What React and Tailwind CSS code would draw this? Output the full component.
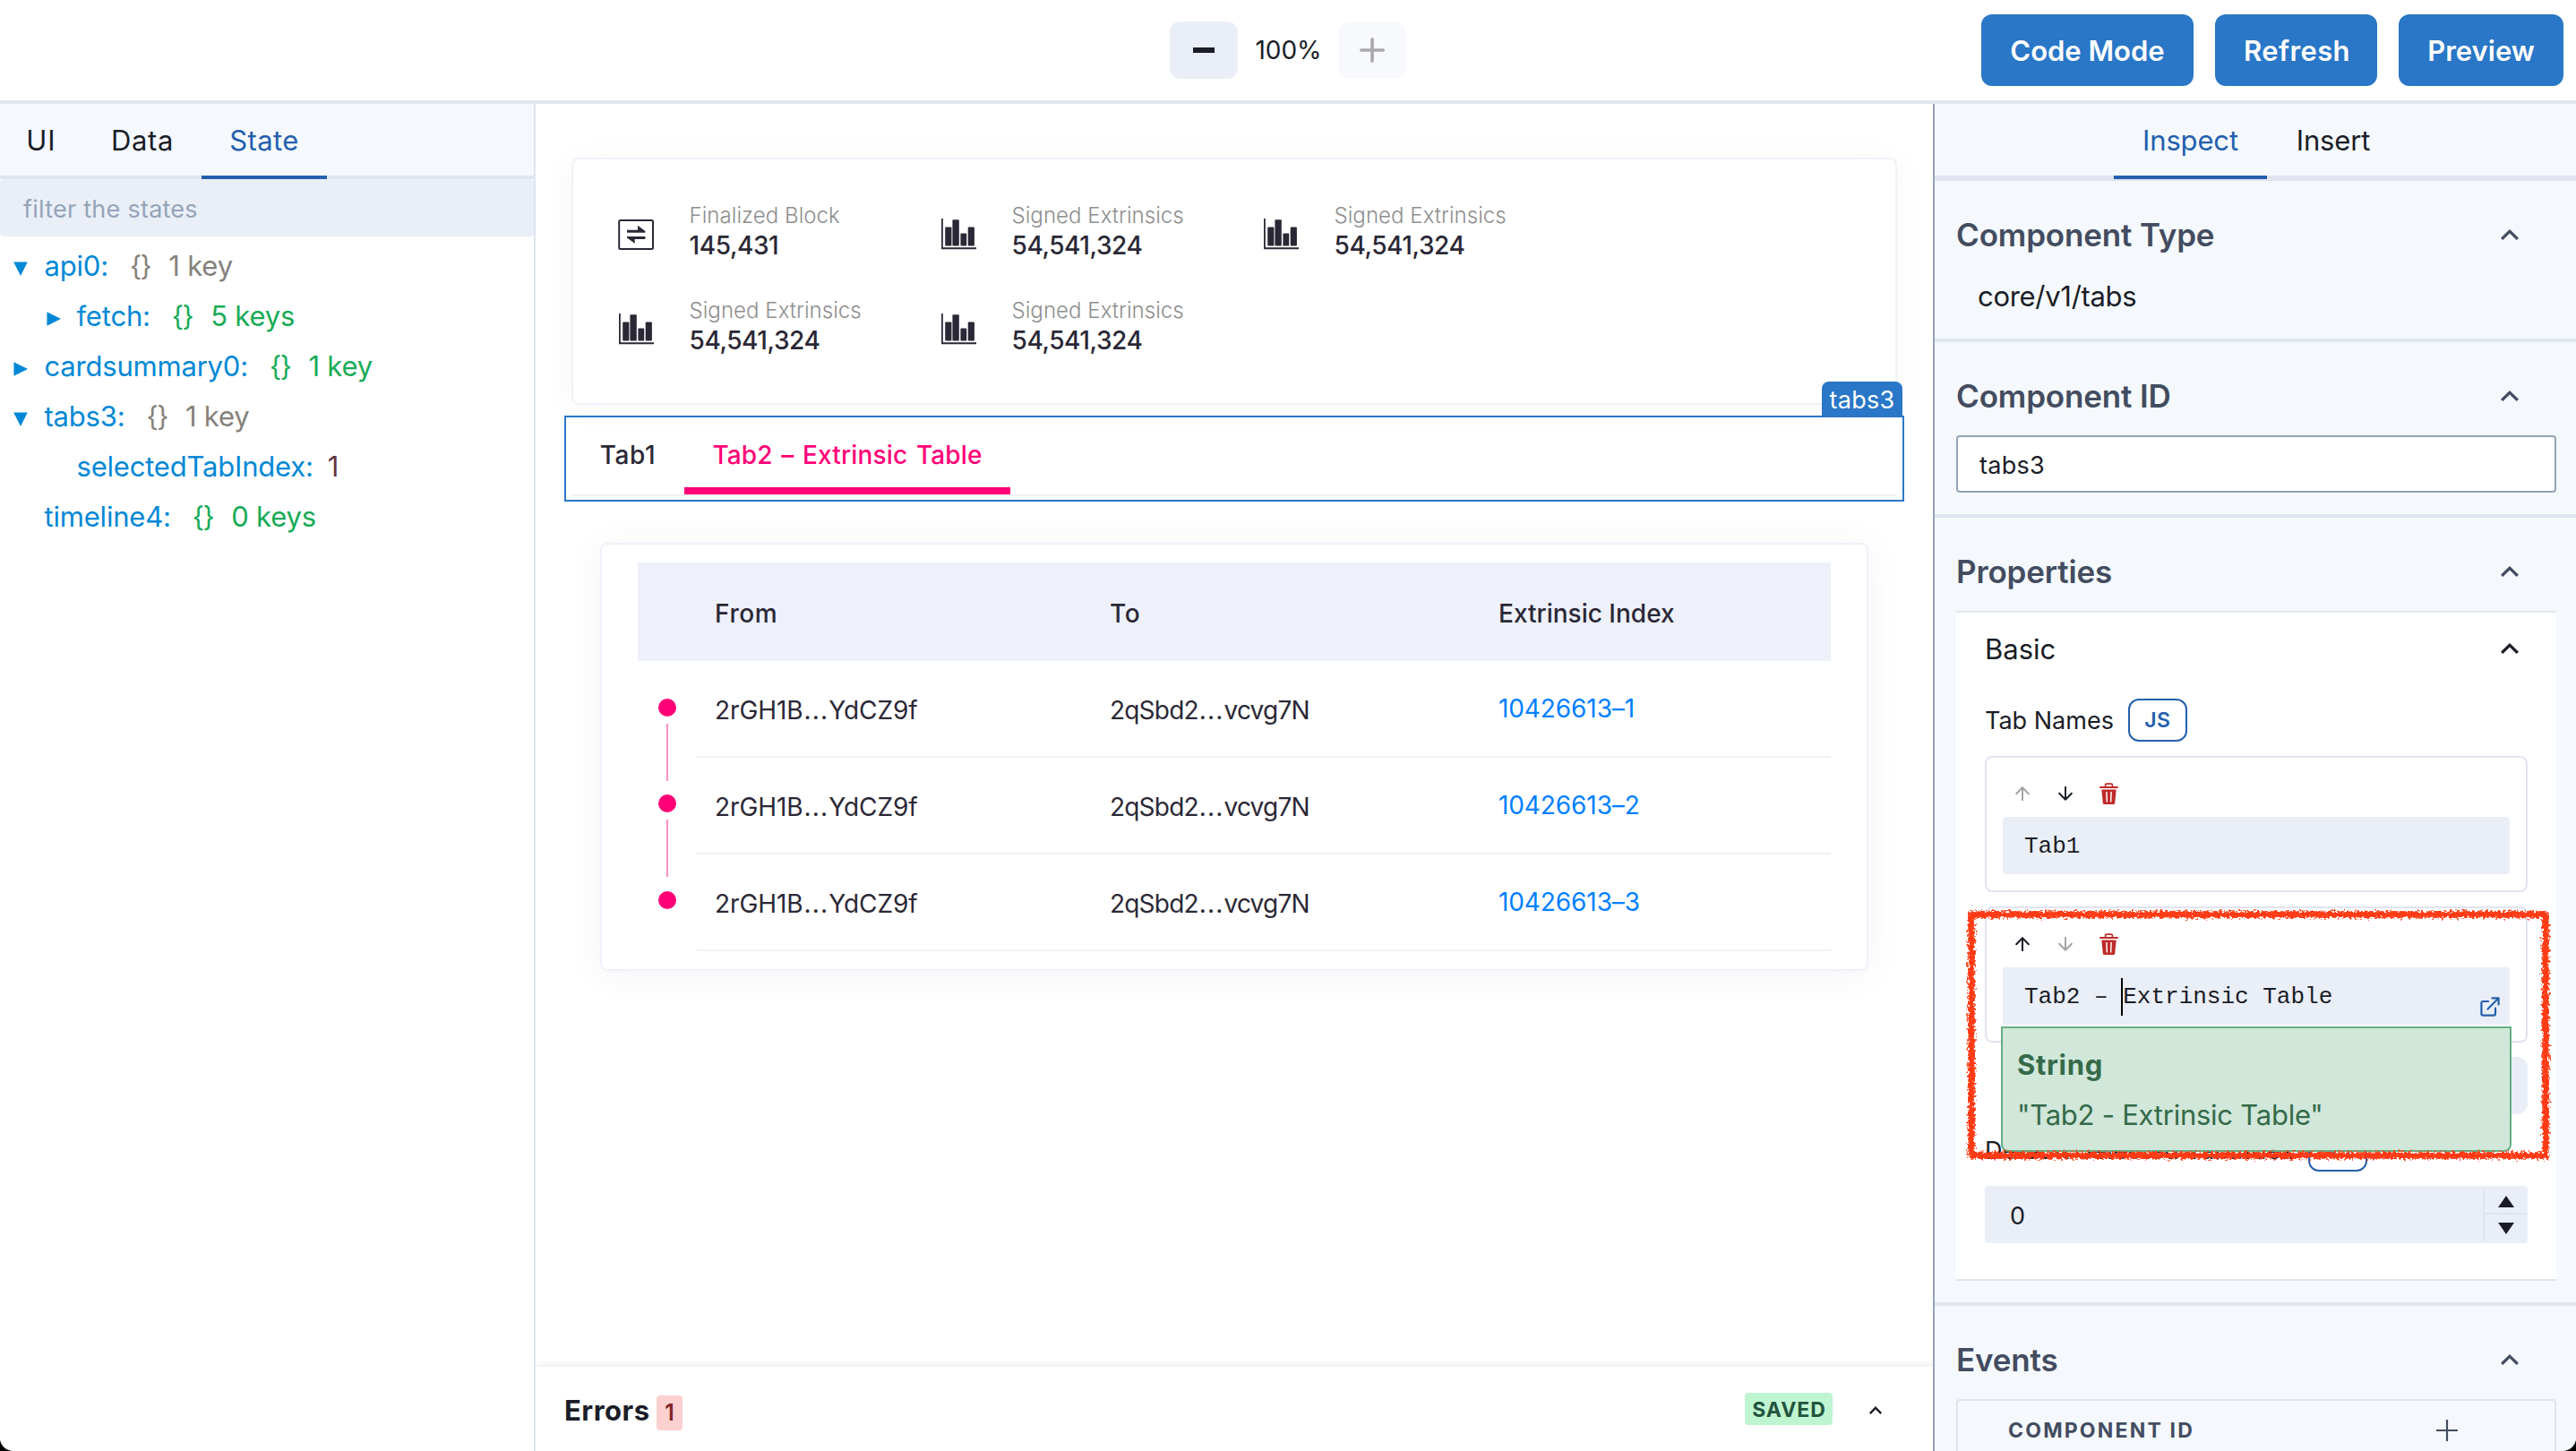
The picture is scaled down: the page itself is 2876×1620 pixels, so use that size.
import React, { useState } from 'react';

const states = [
    { name: 'api0:', open: true, keys: '1 key', tone: 'text-[#85817b]' },
    { name: 'fetch:', open: false, keys: '5 keys', tone: 'text-[#18ab57]', nested: true },
    { name: 'cardsummary0:', open: false, keys: '1 key', tone: 'text-[#18ab57]' },
    { name: 'tabs3:', open: true, keys: '1 key', tone: 'text-[#85817b]' },
    { name: 'selectedTabIndex:', value: '1', nested: true },
    { name: 'timeline4:', keys: '0 keys', tone: 'text-[#18ab57]' },
];

const stats = [
    { label: 'Finalized Block', value: '145,431', icon: 'exchange' },
    { label: 'Signed Extrinsics', value: '54,541,324', icon: 'bars' },
    { label: 'Signed Extrinsics', value: '54,541,324', icon: 'bars' },
    { label: 'Signed Extrinsics', value: '54,541,324', icon: 'bars' },
    { label: 'Signed Extrinsics', value: '54,541,324', icon: 'bars' },
];

const extrinsics = ['10426613–1', '10426613–2', '10426613–3'];

function Chevron({ className = 'h-3 w-5' }) {
    return (
        <svg viewBox="6 8 12 7.41" preserveAspectRatio="none" className={className} fill="currentColor">
            <path d="M12 8l-6 6 1.41 1.41L12 10.83l4.59 4.58L18 14z" />
        </svg>
    );
}

function Arrow({ down, disabled }) {
    return (
        <button className={`flex w-12 justify-center ${disabled ? 'text-[#a3a4a8]' : 'text-[#1a1d27]'}`}>
            <svg viewBox="0 0 16 16" className={`size-4 ${down ? 'rotate-180' : ''}`} fill="none" stroke="currentColor" strokeWidth="2" strokeLinecap="round" strokeLinejoin="round">
                <path d="M8 15.2V1.2M1.2 8.2L8 1.2l6.8 7" />
            </svg>
        </button>
    );
}

function Trash() {
    return (
        <button className="flex w-12 justify-center text-[#bf2a2a]">
            <svg viewBox="0 0 21 24" className="h-6 w-[21px]">
                <path d="M6.6 5V2.6A1.4 1.4 0 0 1 8 1.2h5a1.4 1.4 0 0 1 1.4 1.4V5" fill="none" stroke="currentColor" strokeWidth="1.7" />
                <rect x="0" y="4" width="21" height="2.1" rx="1" fill="currentColor" />
                <path
                    fillRule="evenodd"
                    fill="currentColor"
                    d="M2.3 7.6h16.4l-1.5 14.8a1.7 1.7 0 0 1-1.7 1.6h-10a1.7 1.7 0 0 1-1.7-1.6zM7.2 10l.4 11.6h1.5L8.7 10zM12.3 10l-.4 11.6h1.5l.4-11.6z"
                />
            </svg>
        </button>
    );
}

function StatIcon({ icon }) {
    if (icon === 'exchange') {
        return (
            <svg viewBox="0 0 40 36" className="mt-5 h-9 w-10 text-[#2b2836]" fill="currentColor">
                <rect x="1.2" y="2" width="37.8" height="32" rx="1.5" fill="none" stroke="currentColor" strokeWidth="2" />
                <path d="M10 15.8v-3h12V7.7l8.4 6.3v1.8zM30.4 20v3H18.7v4.8L10 21.5V20z" />
            </svg>
        );
    }
    return (
        <svg viewBox="0 0 40 36" className="mt-5 h-9 w-10 text-[#2b2836]" fill="currentColor">
            <path d="M1 0h1.8v32.2H40v2H1z" />
            <rect x="5.2" y="9.6" width="7.2" height="21" rx="1" />
            <rect x="13.4" y="1.2" width="7.4" height="29.4" rx="1" />
            <rect x="22.4" y="16.4" width="6.8" height="14.2" rx="1" />
            <rect x="30.7" y="9.6" width="7.2" height="21" rx="1" />
        </svg>
    );
}

function Header() {
    return (
        <header className="grid h-[116px] shrink-0 grid-cols-[1fr_auto_1fr] items-center border-b-4 border-[#dfe6ef] bg-white">
            <div className="col-start-2 flex items-center">
                <button className="flex h-16 w-19 items-center justify-center rounded-xl bg-[#eaeef7]">
                    <span className="h-1.5 w-6 bg-[#1a1d27]" />
                </button>
                <span className="w-28 pl-px text-center text-[28px]">100%</span>
                <button className="flex h-16 w-19 items-center justify-center rounded-xl bg-[#f8f9fc] text-[#a9a9ac]">
                    <svg viewBox="0 0 28 28" className="size-7" stroke="currentColor" strokeWidth="3.6" strokeLinecap="round">
                        <path d="M14 1.8v24.4M1.8 14h24.4" />
                    </svg>
                </button>
            </div>
            <div className="flex justify-end gap-6 pr-3.5 text-[31px] font-semibold text-white">
                <button className="h-20 w-[237px] rounded-xl bg-[#2a77c7] pt-0.5">Code Mode</button>
                <button className="h-20 w-[181px] rounded-xl bg-[#2a77c7] pt-0.5 pl-0.5 tracking-[0.4px]">Refresh</button>
                <button className="h-20 w-[184px] rounded-xl bg-[#2a77c7] pt-0.5">Preview</button>
            </div>
        </header>
    );
}

function StateRow({ name, open, keys, tone, value, nested }) {
    return (
        <li className={`flex h-14 items-center ${nested ? 'pl-[52px]' : 'pl-[15px]'}`}>
            <span className={`flex text-[#0088d6] ${nested ? 'w-[33.5px]' : 'w-[34.5px]'}`}>
                {open !== undefined && (
                    <svg viewBox="0 0 15 15" className={`mt-1.5 size-4 ${open ? 'rotate-90' : ''}`} fill="currentColor">
                        <path d="M0.4 0.2L15 7.5L0.4 14.8z" />
                    </svg>
                )}
            </span>
            <span className="text-[#0088d6]">{name}</span>
            {keys && <span className={`ml-6 tracking-[-1.5px] ${tone}`}>{'{}'}</span>}
            {keys && <span className={`ml-5 ${tone}`}>{keys}</span>}
            {value && <span className="ml-4 text-[#5e3643]">{value}</span>}
        </li>
    );
}

function StatePanel() {
    return (
        <aside className="w-[598px] shrink-0 border-r-2 border-[#dee4ef] bg-white text-[31px]">
            <nav className="flex h-21 border-b-4 border-[#dfe4ee] bg-[#f5f9fd]">
                <button className="h-21 w-[91px] pt-0.5 pb-1 pl-px tracking-[1px]">UI</button>
                <button className="h-21 w-[134px] pt-0.5 pb-1 pl-0.5 tracking-[0.6px]">Data</button>
                <button className="h-21 w-[140px] border-b-4 border-[#245fae] pt-0.5 tracking-[0.4px] text-[#245fae]">State</button>
            </nav>
            <input
                className="block h-16 w-full rounded-sm bg-[#eaeff7] pt-0.5 pl-[26px] text-[27px] tracking-[0.25px] outline-none placeholder:text-[#94a4b9]"
                placeholder="filter the states"
            />
            <ul className="pt-[5px] tracking-[-0.2px]">
                {states.map((s) => (
                    <StateRow key={s.name} {...s} />
                ))}
            </ul>
        </aside>
    );
}

function SummaryCard() {
    return (
        <div className="h-[276px] rounded-lg border-2 border-[#eff2f9] bg-white pt-[46px] pl-[50px] shadow-[0_4px_40px_rgba(0,0,0,0.035)]">
            <div className="grid grid-cols-[360px_360px_360px] gap-y-10">
                {stats.map((s, i) => (
                    <div key={i} className="flex h-[66px] gap-[39.5px]">
                        <StatIcon icon={s.icon} />
                        <div className="pt-px">
                            <div className="text-2xl/8 font-light tracking-[0.05px] text-[#8e8e8e]">{s.label}</div>
                            <div className="text-[28px]/[35px] font-medium tracking-[-0.4px] text-[#2b2836]">{s.value}</div>
                        </div>
                    </div>
                ))}
            </div>
        </div>
    );
}

function TabsBlock() {
    return (
        <div className="relative -mx-2 mt-3 h-24 border-2 border-[#2a77c7]">
            <span className="absolute right-0 bottom-full flex h-10 w-[90px] items-center justify-center rounded-t-lg bg-[#2a77c7] pt-[3px] text-[27px] tracking-[0.3px] text-white">
                tabs3
            </span>
            <div className="mx-1.5 flex h-22 border-b-2 border-[#eff2f7] text-[28px] font-medium">
                <button className="w-[126px] pb-0.5 tracking-[0.6px] text-[#2b2836]">Tab1</button>
                <button className="w-[364px] border-b-8 border-[#ff0077] pt-1.5 tracking-[0.15px] [word-spacing:2px] text-[#ff0077]">Tab2 – Extrinsic Table</button>
            </div>
        </div>
    );
}

function Address({ head, tail }) {
    return (
        <>
            {head}
            <span className="ml-px tracking-[1.2px]">...</span>
            {tail}
        </>
    );
}

function TimelineTable() {
    return (
        <div className="mx-8 mt-[46px] rounded-lg border-2 border-[#eff2f9] bg-white px-10 py-5 text-[28px] text-[#2b2836] shadow-[0_4px_40px_rgba(0,0,0,0.05)]">
            <div className="flex h-[110px] items-center bg-[#eef1fa] pt-1 pl-[66px] font-medium">
                <div className="w-[441px] pl-5 tracking-[0.6px]">From</div>
                <div className="w-[434px] pl-5 tracking-[0.6px]">To</div>
                <div className="pl-5">Extrinsic Index</div>
            </div>
            <div className="flex">
                <div className="flex w-[66px] flex-col items-center pt-[42px]">
                    {extrinsics.map((id, i) => (
                        <React.Fragment key={id}>
                            <span className="size-5 rounded-full bg-[#ff0077]" />
                            {i < extrinsics.length - 1 && <span className="mt-2 mb-[15.4px] h-16 w-0.5 bg-[#ff8fc4]" />}
                        </React.Fragment>
                    ))}
                </div>
                <div className="flex-1">
                    {extrinsics.map((id) => (
                        <div key={id} className="flex h-27 items-center border-b-2 border-[#eff2f8]">
                            <div className="w-[441px] pt-1 pl-5 tracking-[-0.1px]">
                                <Address head="2rGH1B" tail="YdCZ9f" />
                            </div>
                            <div className="w-[434px] pt-1 pl-5 tracking-[-0.8px]">
                                <Address head="2qSbd2" tail="vcvg7N" />
                            </div>
                            <a className="pl-5 tracking-[-0.1px] text-[#0080ff]">{id}</a>
                        </div>
                    ))}
                </div>
            </div>
        </div>
    );
}

function ErrorBar() {
    return (
        <div className="flex h-[94px] items-center bg-white pl-8 shadow-[0_0_10px_rgba(0,0,0,0.13)]">
            <span className="pt-1 text-[31px] font-bold tracking-[0.5px]">Errors</span>
            <span className="mt-2 ml-[7px] flex h-[39px] w-[29px] items-center justify-center rounded bg-[#fdd0d0] pt-0.5 pl-px text-[25px] font-semibold text-[#7e2527]">1</span>
            <span className="ml-auto flex h-9 w-[98px] items-center justify-center rounded bg-[#c0f5d2] pt-[3px] pl-px text-[23px] font-bold tracking-[0.95px] text-[#22543d]">SAVED</span>
            <button className="mt-0.5 mr-[57px] ml-[41px]">
                <Chevron className="h-[9px] w-3.5" />
            </button>
        </div>
    );
}

function Section({ title, children, last }) {
    return (
        <section className={`pt-6 pr-[22px] pl-6 ${last ? '' : 'border-b-4 border-[#dfe6ef] pb-6'}`}>
            <div className="mb-2 flex h-18 items-center justify-between pr-[42px] text-[#434c60]">
                <h2 className="pt-px text-[35px] font-semibold tracking-[-0.15px]">{title}</h2>
                <Chevron />
            </div>
            {children}
        </section>
    );
}

function JsButton() {
    return <button className="h-12 w-[66px] rounded-xl border-2 border-[#245fae] text-[23px] font-semibold tracking-[0.6px] text-[#245fae]">JS</button>;
}

function TabItem({ first, active, value, children }) {
    return (
        <div className="relative mt-4 h-[152px] rounded-lg border-2 border-[#dfe4ef] px-[18px] pt-[26px]">
            <div className="-ml-0.5 flex h-7 items-center">
                <Arrow disabled={first} />
                <Arrow down disabled={!first} />
                <Trash />
            </div>
            <div className="relative mt-3 flex h-16 items-center rounded-sm bg-[#eaeef7] pr-[11px] pl-6 font-['Liberation_Mono',monospace] text-[26px]">
                {active ? (
                    <span className="whitespace-pre pt-[3px]">
                        Tab2 – <span className="-ml-px -mr-px border-l-2 border-black py-1.5">Extrinsic Table</span>
                    </span>
                ) : (
                    <span className="pt-[3px]">{value}</span>
                )}
                {active && (
                    <svg viewBox="0 0 22 22" className="mt-[24px] ml-auto size-[22px] text-[#245fae]" fill="none" stroke="currentColor" strokeWidth="2.2" strokeLinecap="round" strokeLinejoin="round">
                        <path d="M9 5H3.2A1.8 1.8 0 0 0 1.4 6.8V18.8A1.8 1.8 0 0 0 3.2 20.6H15.2A1.8 1.8 0 0 0 17 18.8V12.5M13.5 1.4H20.6V8.5M20.2 1.8L8.5 13.5" />
                    </svg>
                )}
                {children}
            </div>
        </div>
    );
}

function ValuePreview() {
    return (
        <div className="absolute -inset-x-0.5 top-full z-10 mt-0.5 h-[140px] rounded-b-lg border-2 border-[#66ae85] bg-[#d0e7da] pt-[13px] pl-4 font-[Inter,sans-serif] text-[31px]/[56px] text-[#356a49]">
            <div className="font-bold tracking-[0.7px]">String</div>
            <div className="tracking-[-0.25px]">"Tab2 - Extrinsic Table"</div>
        </div>
    );
}

// hand drawn marker around the edited item
function MarkerFrame() {
    return (
        <svg viewBox="0 0 660 288" className="pointer-events-none absolute top-4 -left-6 z-20 h-[288px] w-[660px]">
            <filter id="chalk" x="0" y="0" width="660" height="288" filterUnits="userSpaceOnUse">
                <feTurbulence type="fractalNoise" baseFrequency="0.35" numOctaves="3" seed="4" result="noise" />
                <feDisplacementMap in="SourceGraphic" in2="noise" scale="9" xChannelSelector="R" yChannelSelector="G" />
            </filter>
            <rect x="9" y="9" width="641" height="269" fill="none" stroke="#ff3a14" strokeWidth="7.5" filter="url(#chalk)" />
        </svg>
    );
}

function Properties() {
    const [index] = useState(0);

    return (
        <div className="flex flex-col border-y-2 border-[#dfe4ee] bg-white px-8 pb-10 text-[27px]">
            <div className="flex h-20 items-center justify-between pr-2.5 text-[31px]">
                <span className="pt-0.5">Basic</span>
                <Chevron />
            </div>
            <div className="mt-4 flex items-center gap-4">
                <span className="pt-0.5">Tab Names</span>
                <JsButton />
            </div>
            <TabItem first value="Tab1" />
            <div className="relative">
                <TabItem active>
                    <ValuePreview />
                </TabItem>
                <MarkerFrame />
            </div>
            <button className="mt-4 h-16 w-20 self-end rounded-xl bg-[#eaeef7]" />
            <div className="mt-4 flex items-center gap-4">
                <span className="pt-0.5 tracking-[0.4px]">Default Selected TabIndex</span>
                <JsButton />
            </div>
            <div className="mt-4 flex h-16 rounded-sm bg-[#eaeef7] p-0.5">
                <span className="flex-1 self-center pt-1 pl-[26px]">{index}</span>
                <div className="flex w-12 flex-col border-l-2 border-[#dfe4ef]">
                    <button className="flex h-7.5 items-center justify-center border-b-2 border-[#dfe4ef] pt-0.5 pl-0.5">
                        <svg viewBox="0 0 18 13" className="h-[13px] w-[18px]"><path d="M9 0L18 13H0z" fill="#1a1d27" /></svg>
                    </button>
                    <button className="flex h-7.5 items-center justify-center pl-0.5">
                        <svg viewBox="0 0 18 13" className="h-[13px] w-[18px]"><path d="M9 13L18 0H0z" fill="#1a1d27" /></svg>
                    </button>
                </div>
            </div>
        </div>
    );
}

function InspectPanel() {
    return (
        <aside className="w-[718px] shrink-0 overflow-hidden border-l-2 border-[#92a3ba] bg-[#f5f9fd]">
            <nav className="flex h-[86px] justify-center border-b-6 border-[#dfe4ee] pl-[3px] text-[31px] tracking-[-0.15px]">
                <button className="h-21 w-[171px] border-b-4 border-[#245fae] pt-0.5 text-[#245fae]">Inspect</button>
                <button className="h-20 w-[148px] pt-0.5">Insert</button>
            </nav>
            <Section title="Component Type">
                <p className="pt-px pl-6 text-[31px]/[47px] tracking-[-0.3px]">core/v1/tabs</p>
            </Section>
            <Section title="Component ID">
                <input
                    className="block h-16 w-full rounded-sm border-2 border-[#92a3ba] bg-white pt-0.5 pl-6 text-[27px] tracking-[0.3px] outline-none"
                    defaultValue="tabs3"
                />
            </Section>
            <Section title="Properties">
                <Properties />
            </Section>
            <Section title="Events" last>
                <div className="h-40 rounded border-2 border-[#dfe4ee]">
                    <div className="flex h-[66px] items-center justify-between pr-[108px] pl-14 text-[23px] font-bold tracking-[2.2px] text-[#434c60]">
                        COMPONENT ID
                        <svg viewBox="0 0 24 24" className="-mt-px size-6" stroke="currentColor" strokeWidth="2.2">
                            <path d="M12 0v24M0 12h24" />
                        </svg>
                    </div>
                </div>
            </Section>
        </aside>
    );
}

export default function App() {
    return (
        <div className="h-[1620px] w-[2876px] bg-black">
            <div className="flex h-full flex-col overflow-hidden rounded-b-[15px] bg-white font-[Inter,sans-serif] text-[#1a1d27]">
                <Header />
                <div className="flex min-h-0 flex-1">
                    <StatePanel />
                    <main className="flex flex-1 flex-col overflow-hidden bg-white">
                        <div className="flex-1 px-10 pt-15">
                            <SummaryCard />
                            <TabsBlock />
                            <TimelineTable />
                        </div>
                        <ErrorBar />
                    </main>
                    <InspectPanel />
                </div>
            </div>
        </div>
    );
}
